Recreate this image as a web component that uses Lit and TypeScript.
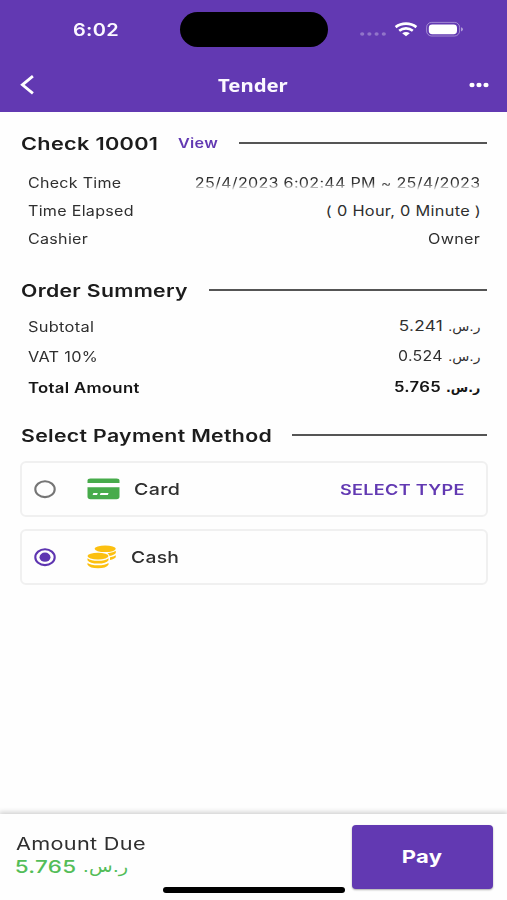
import { LitElement, html, css, svg } from "lit";
import { customElement, property, query } from "lit/decorators.js";

/** A single line of text stretched horizontally so that its ink is exactly `w` pixels wide. */
@customElement("wide-text")
class WideText extends LitElement {
  @property() text = "";
  @property({ type: Number }) w = 0;
  @property({ type: Boolean }) rtl = false;
  @query("bdi") private inner!: HTMLElement;

  static styles = css`
    :host {
      display: block;
      flex: none;
      white-space: nowrap;
      direction: ltr;
      text-align: left;
    }
    bdi {
      display: inline-block;
      transform-origin: 0 50%;
      white-space: pre;
    }
  `;

  updated() {
    const cs = getComputedStyle(this);
    const ctx = document.createElement("canvas").getContext("2d") as any;
    ctx.font = `${cs.fontWeight} ${cs.fontSize} ${cs.fontFamily}`;
    ctx.letterSpacing = cs.letterSpacing === "normal" ? "0px" : cs.letterSpacing;
    ctx.direction = this.rtl ? "rtl" : "ltr";
    ctx.textAlign = "left";
    const m = ctx.measureText(this.text);
    const ink = m.actualBoundingBoxLeft + m.actualBoundingBoxRight;
    const scale = this.w / ink;
    this.style.width = `${this.w}px`;
    this.inner.style.transform = `translateX(${m.actualBoundingBoxLeft * scale}px) scaleX(${scale})`;
  }

  render() {
    return html`<bdi dir=${this.rtl ? "rtl" : "ltr"}>${this.text}</bdi>`;
  }
}

const t = (text: string, w: number, cls = "") =>
  html`<wide-text class=${cls} .text=${text} .w=${w}></wide-text>`;
const riyal = (w: number) =>
  html`<wide-text class="riyal" .text=${"ر.س."} .w=${w} .rtl=${true}></wide-text>`;

const ellipses = (list: number[][]) =>
  list.map(([x, y, rx, ry]) => svg`<ellipse cx=${x} cy=${y} rx=${rx} ry=${ry}></ellipse>`);

@customElement("app-root")
class AppRoot extends LitElement {
  static styles = css`
    :host {
      display: flex;
      flex-direction: column;
      height: 900px;
      background: #fefefe;
      color: #2f2f2f;
      font-family: Inter, "Liberation Sans", "DejaVu Sans", sans-serif;
      letter-spacing: 0.25px;
      overflow: hidden;
    }
    svg {
      display: block;
      flex: none;
    }
    header {
      flex: none;
      height: 111.5px;
      background: #6239b2;
      color: #fbf8ff;
    }
    .status {
      display: flex;
      align-items: center;
      height: 59px;
      padding-left: 73px;
    }
    .clock {
      font-size: 17px;
      font-weight: 600;
    }
    .island {
      width: 148px;
      height: 35.5px;
      border-radius: 18px;
      background: #000;
      margin-left: 62px;
    }
    .signals {
      margin-left: 32px;
    }
    .nav {
      display: flex;
      align-items: center;
      height: 52px;
      padding: 0 18px 0 19.5px;
      justify-content: space-between;
    }
    .title {
      font: 700 18.5px "Noto Sans", "Open Sans", sans-serif;
      letter-spacing: 0;
      margin: -2px 0 0 2px;
    }
    main {
      flex: 1;
      padding: 18px 20px 0 21px;
    }
    .heading {
      display: flex;
      align-items: center;
      height: 28px;
      font-size: 17px;
      font-weight: 600;
      color: #1c1c1c;
    }
    .rule {
      flex: 1;
      height: 2px;
      background: #555;
      margin: 0 0 1px 21px;
    }
    .view {
      margin: 0 0 1px 21.5px;
      font-size: 13.3px;
      color: #6239b2;
    }
    .rows {
      padding: 0 8px 0 7px;
      font-size: 13.9px;
    }
    .facts {
      margin: 11.5px 0 23.5px;
    }
    .row {
      display: flex;
      align-items: center;
      justify-content: space-between;
      height: 28px;
    }
    .fade {
      -webkit-mask-image: linear-gradient(#000 50%, #0004 82%);
      mask-image: linear-gradient(#000 50%, #0004 82%);
    }
    .totals {
      margin: 7px 0 18.3px;
      padding-right: 7px;
    }
    .totals .row {
      height: 30.6px;
    }
    .money {
      display: flex;
      align-items: center;
      gap: 6.2px;
      margin-bottom: 2.4px;
    }
    .riyal {
      font-family: "DejaVu Sans", sans-serif;
      font-size: 12.5px;
      letter-spacing: 0;
      padding-top: 1px;
    }
    .strong {
      font-weight: 600;
      color: #161616;
    }
    .method {
      display: flex;
      align-items: center;
      box-sizing: border-box;
      height: 56px;
      border: 2px solid #f0f0f0;
      border-radius: 6px;
      margin: 0 -1px 12px;
      padding: 0 22.5px 0 11.5px;
      font-size: 16.3px;
      font-weight: 500;
    }
    .first {
      margin-top: 11.7px;
    }
    .icon {
      margin: 0 14.5px 0 30px;
    }
    .cash {
      margin-right: 14.5px;
    }
    .select {
      margin-left: auto;
      font-size: 14.3px;
      font-weight: 600;
      color: #6239b2;
    }
    footer {
      position: relative;
      flex: none;
      display: flex;
      justify-content: space-between;
      box-sizing: border-box;
      height: 86.5px;
      padding: 11.5px 14px 0 15.5px;
      background: #fefefe;
      box-shadow: 0 -1px 5px 1px #0000002e;
    }
    .due {
      padding-top: 7.8px;
      font-size: 17.2px;
      line-height: 22.5px;
    }
    .due .money {
      gap: 9px;
      margin: 0;
      font-size: 17.5px;
      font-weight: 500;
      color: #53bd58;
    }
    .due .riyal {
      font-size: 16.5px;
      font-weight: 400;
    }
    .pay {
      display: flex;
      align-items: center;
      justify-content: center;
      width: 141px;
      height: 63.5px;
      border-radius: 4px;
      background: #6239b2;
      box-shadow: 0 1px 2px #0005;
      color: #fff;
      font-size: 17.6px;
      font-weight: 700;
    }
    .home {
      position: absolute;
      left: 163px;
      bottom: 7.5px;
      width: 181.5px;
      height: 5.3px;
      border-radius: 3px;
      background: #000;
    }
  `;

  private radio(on: boolean) {
    const c = on ? "#5e35b1" : "#757575";
    return html`<svg width="23" height="20" viewBox="0 0 23 20">
      <ellipse cx="11" cy="10.2" rx="9.7" ry="7.9" fill="none" stroke=${c} stroke-width="2.1"></ellipse>
      ${on ? svg`<ellipse cx="11" cy="10.2" rx="5.5" ry="4.6" fill=${c}></ellipse>` : ""}
    </svg>`;
  }

  private line(label: string, lw: number, value: string, vw: number, cls = "") {
    return html`<div class="row">${t(label, lw)}${t(value, vw, cls)}</div>`;
  }

  private total(label: string, lw: number, value: string, vw: number, rw: number, cls = "") {
    return html`<div class="row ${cls}">
      ${t(label, lw)}
      <div class="money">${t(value, vw)}${riyal(rw)}</div>
    </div>`;
  }

  render() {
    return html`
      <header>
        <div class="status">
          ${t("6:02", 45, "clock")}
          <div class="island"></div>
          <svg class="signals" width="104" height="20" viewBox="360 19 104 20">
            <g fill="#fff" opacity=".3">
              ${ellipses([[362.2, 33, 2.1, 1.8], [369.4, 33, 2.1, 1.8], [376.6, 33, 2.1, 1.8], [383.8, 33, 2.1, 1.8]])}
            </g>
            <g fill="none" stroke="#fff" stroke-width="2.7">
              <path d="M395.6 26.1Q400.2 22.6 406 22.6T416.4 26.1"></path>
              <path d="M399.2 29.8Q402.3 27.4 406 27.4T412.8 29.8"></path>
            </g>
            <path fill="#fff" d="M402.2 32.2Q406 30 409.8 32.2L406 35.3Z"></path>
            <rect x="426.6" y="21.4" width="33" height="13.6" rx="5" fill="none" stroke="#fff" stroke-opacity=".4"></rect>
            <rect x="428.8" y="23.4" width="28.2" height="9.8" rx="3.4" fill="#fff"></rect>
            <path d="M461 26.2Q463 26.8 463 28.3T461 30.4Z" fill="#fff" fill-opacity=".5"></path>
          </svg>
        </div>
        <div class="nav">
          <svg width="16" height="22" viewBox="0 0 16 22">
            <path d="M12.9 2.2L2.4 10.8L12.9 19.4" fill="none" stroke="#fff" stroke-width="2.8"></path>
          </svg>
          ${t("Tender", 70.5, "title")}
          <svg width="20" height="8" viewBox="0 0 20 8" fill="#fff">
            ${ellipses([[3, 4, 2.6, 2.2], [10, 4, 2.6, 2.2], [17, 4, 2.6, 2.2]])}
          </svg>
        </div>
      </header>

      <main>
        <div class="heading">
          ${t("Check 10001", 135.5)}${t("View", 39.5, "view")}
          <div class="rule"></div>
        </div>
        <div class="rows facts">
          ${this.line("Check Time", 93, "25/4/2023 6:02:44 PM ~ 25/4/2023", 283.5, "fade")}
          ${this.line("Time Elapsed", 105, "( 0 Hour, 0 Minute )", 152.5)}
          ${this.line("Cashier", 59.5, "Owner", 51.5)}
        </div>

        <div class="heading">${t("Order Summery", 166.5)}<div class="rule"></div></div>
        <div class="rows totals">
          ${this.total("Subtotal", 65.5, "5.241", 42, 31.5)}
          ${this.total("VAT 10%", 69, "0.524", 44.5, 31.5)}
          ${this.total("Total Amount", 111.5, "5.765", 47, 33, "strong")}
        </div>

        <div class="heading">${t("Select Payment Method", 250)}<div class="rule"></div></div>
        <div class="method first">
          ${this.radio(false)}
          <svg class="icon" width="33" height="22" viewBox="0 0 33 22" fill="#47ab4b">
            <path d="M.5 5V2.8Q.5.6 3.5.6H29.5Q32.5.6 32.5 2.8V5Z"></path>
            <path fill-rule="evenodd" d="M.5 9.2H32.5V18.6Q32.5 21.2 29.5 21.2H3.5Q.5 21.2.5 18.6ZM6.4 15L5.6 17H10L10.8 15ZM13.6 15L12.8 17H20.8L21.6 15Z"></path>
          </svg>
          ${t("Card", 44.5)}${t("SELECT TYPE", 123.5, "select")}
        </div>
        <div class="method">
          ${this.radio(true)}
          <svg class="icon cash" width="30" height="24" viewBox="0 0 30 24" fill="#fcc010">
            <ellipse cx="18.2" cy="3.8" rx="10.6" ry="3.3"></ellipse>
            <path d="M20.5 8.3Q26.3 7.6 28.8 5.8V8Q27.4 10.2 22.6 10.9Q22 9.3 20.5 8.3Z"></path>
            <path d="M23 12.3Q26.8 11.6 28.8 10.2V12.3Q27.6 14.1 23 14.9Z"></path>
            <ellipse cx="11" cy="11.1" rx="10.5" ry="3.4"></ellipse>
            <path d="M.5 13.2Q4 15.8 11 15.8T21.5 13.2V15.2Q19.2 18.6 11 18.6T.5 15.2Z"></path>
            <path d="M.5 18Q4 20.3 11 20.3T21.5 18V19.8Q19.2 23.3 11 23.3T.5 19.8Z"></path>
          </svg>
          ${t("Cash", 47)}
        </div>
      </main>

      <footer>
        <div class="due">
          ${t("Amount Due", 129.5)}
          <div class="money">${t("5.765", 59)}${riyal(43)}</div>
        </div>
        <div class="pay">${t("Pay", 39.5)}</div>
        <div class="home"></div>
      </footer>
    `;
  }
}
